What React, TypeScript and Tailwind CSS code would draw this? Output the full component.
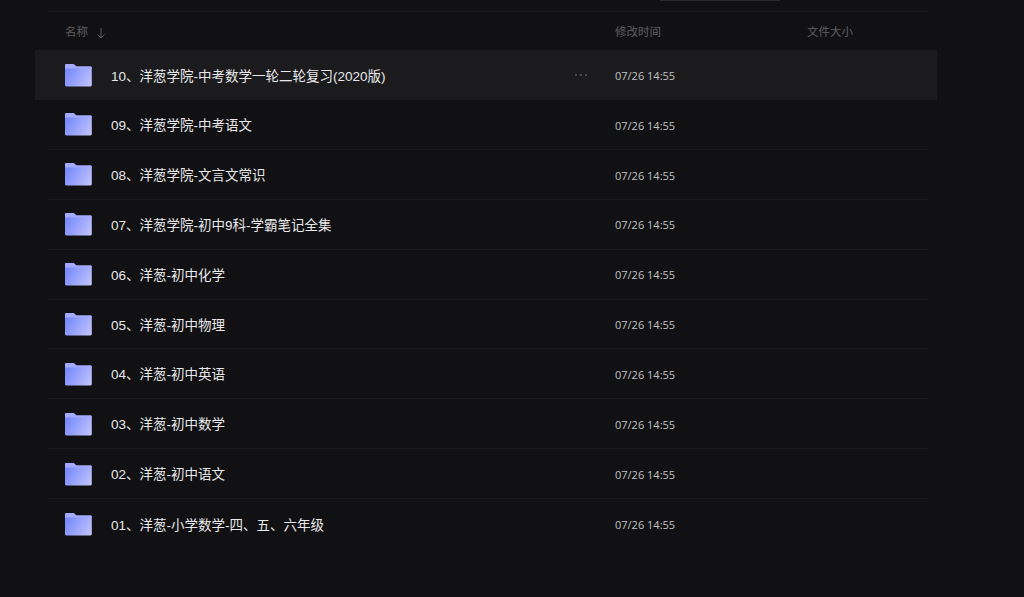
const rows = [
  "10、洋葱学院-中考数学一轮二轮复习(2020版)",
  "09、洋葱学院-中考语文",
  "08、洋葱学院-文言文常识",
  "07、洋葱学院-初中9科-学霸笔记全集",
  "06、洋葱-初中化学",
  "05、洋葱-初中物理",
  "04、洋葱-初中英语",
  "03、洋葱-初中数学",
  "02、洋葱-初中语文",
  "01、洋葱-小学数学-四、五、六年级",
];

function Folder() {
  return (
    <svg width="28" height="24" viewBox="1 0 28 24" className="shrink-0">
      <defs>
        <linearGradient id="fg" x1="0" y1="0.3" x2="1" y2="0.8">
          <stop offset="0" stopColor="#7488ff" />
          <stop offset="1" stopColor="#bfc1fa" />
        </linearGradient>
      </defs>
      <path d="M1 2.5C1 1.6 1.6 1 2.5 1H9.5L12.5 3.5H26.5C27.4 3.5 27.8 4 27.8 5V22C27.8 23 27.2 23.4 26.5 23.4H2.3C1.5 23.4 1 23 1 22Z" fill="url(#fg)" />
      <path d="M1 2.5C1 1.6 1.6 1 2.5 1H9.5L12.5 3.5H26.5C27.4 3.5 27.8 4 27.8 5V5.6H1Z" fill="#a4aafc" />
    </svg>
  );
}

export default function App() {
  return (
    <div
      className="relative h-[597px] w-[1024px] overflow-hidden bg-[#111113]"
      style={{ fontFamily: '"Liberation Sans", "Noto Sans CJK SC", sans-serif' }}
    >
      <div className="absolute left-[660px] top-0 h-[1px] w-[120px] bg-[#2a2a2c]" />
      <div className="ml-[47px] mr-[96px] h-[12px] border-b border-[#1a1a1c]" />
      <div className="flex h-[38px] items-center pl-[65px] pt-[3px] text-[11.5px] text-[#5f5f62]">
        <div className="flex w-[550px] items-center gap-[8px]">
          <span>名称</span>
          <svg width="10" height="12" viewBox="0 0 10 12" fill="none" stroke="#5f5f62" strokeWidth="1">
            <path d="M5 1V10.5M1.5 7.5L5 11L8.5 7.5" />
          </svg>
        </div>
        <div className="w-[192px]">修改时间</div>
        <div>文件大小</div>
      </div>
      <div className="flex flex-col">
        {rows.map((name, i) => (
          <div
            key={name}
            className={
              i === 0
                ? "ml-[35px] mr-[87px] flex h-[50px] items-center bg-[#1b1b1d] pl-[30px]"
                : "ml-[47px] mr-[96px] flex h-[49.9px] items-center pl-[18px] " + (i < 9 ? "border-b border-[#1a1a1c]" : "")
            }
          >
            <Folder />
            <div className="ml-[18px] w-[457px] truncate pt-[3px] text-[13.5px] leading-[20px] text-[#e8e8ea]">{name}</div>
            <div className="flex w-[47px] justify-start pl-[7px]">
              {i === 0 && (
                <span className="flex gap-[3px]">
                  <span className="h-[2px] w-[2px] rounded-full bg-[#5a5a5d]" />
                  <span className="h-[2px] w-[2px] rounded-full bg-[#5a5a5d]" />
                  <span className="h-[2px] w-[2px] rounded-full bg-[#5a5a5d]" />
                </span>
              )}
            </div>
            <div className="pt-[3px] text-[11px] text-[#c2c2c4]" style={{ fontFamily: '"Open Sans", "Noto Sans", sans-serif' }}>
              07/26 14:55
            </div>
          </div>
        ))}
      </div>
    </div>
  );
}
